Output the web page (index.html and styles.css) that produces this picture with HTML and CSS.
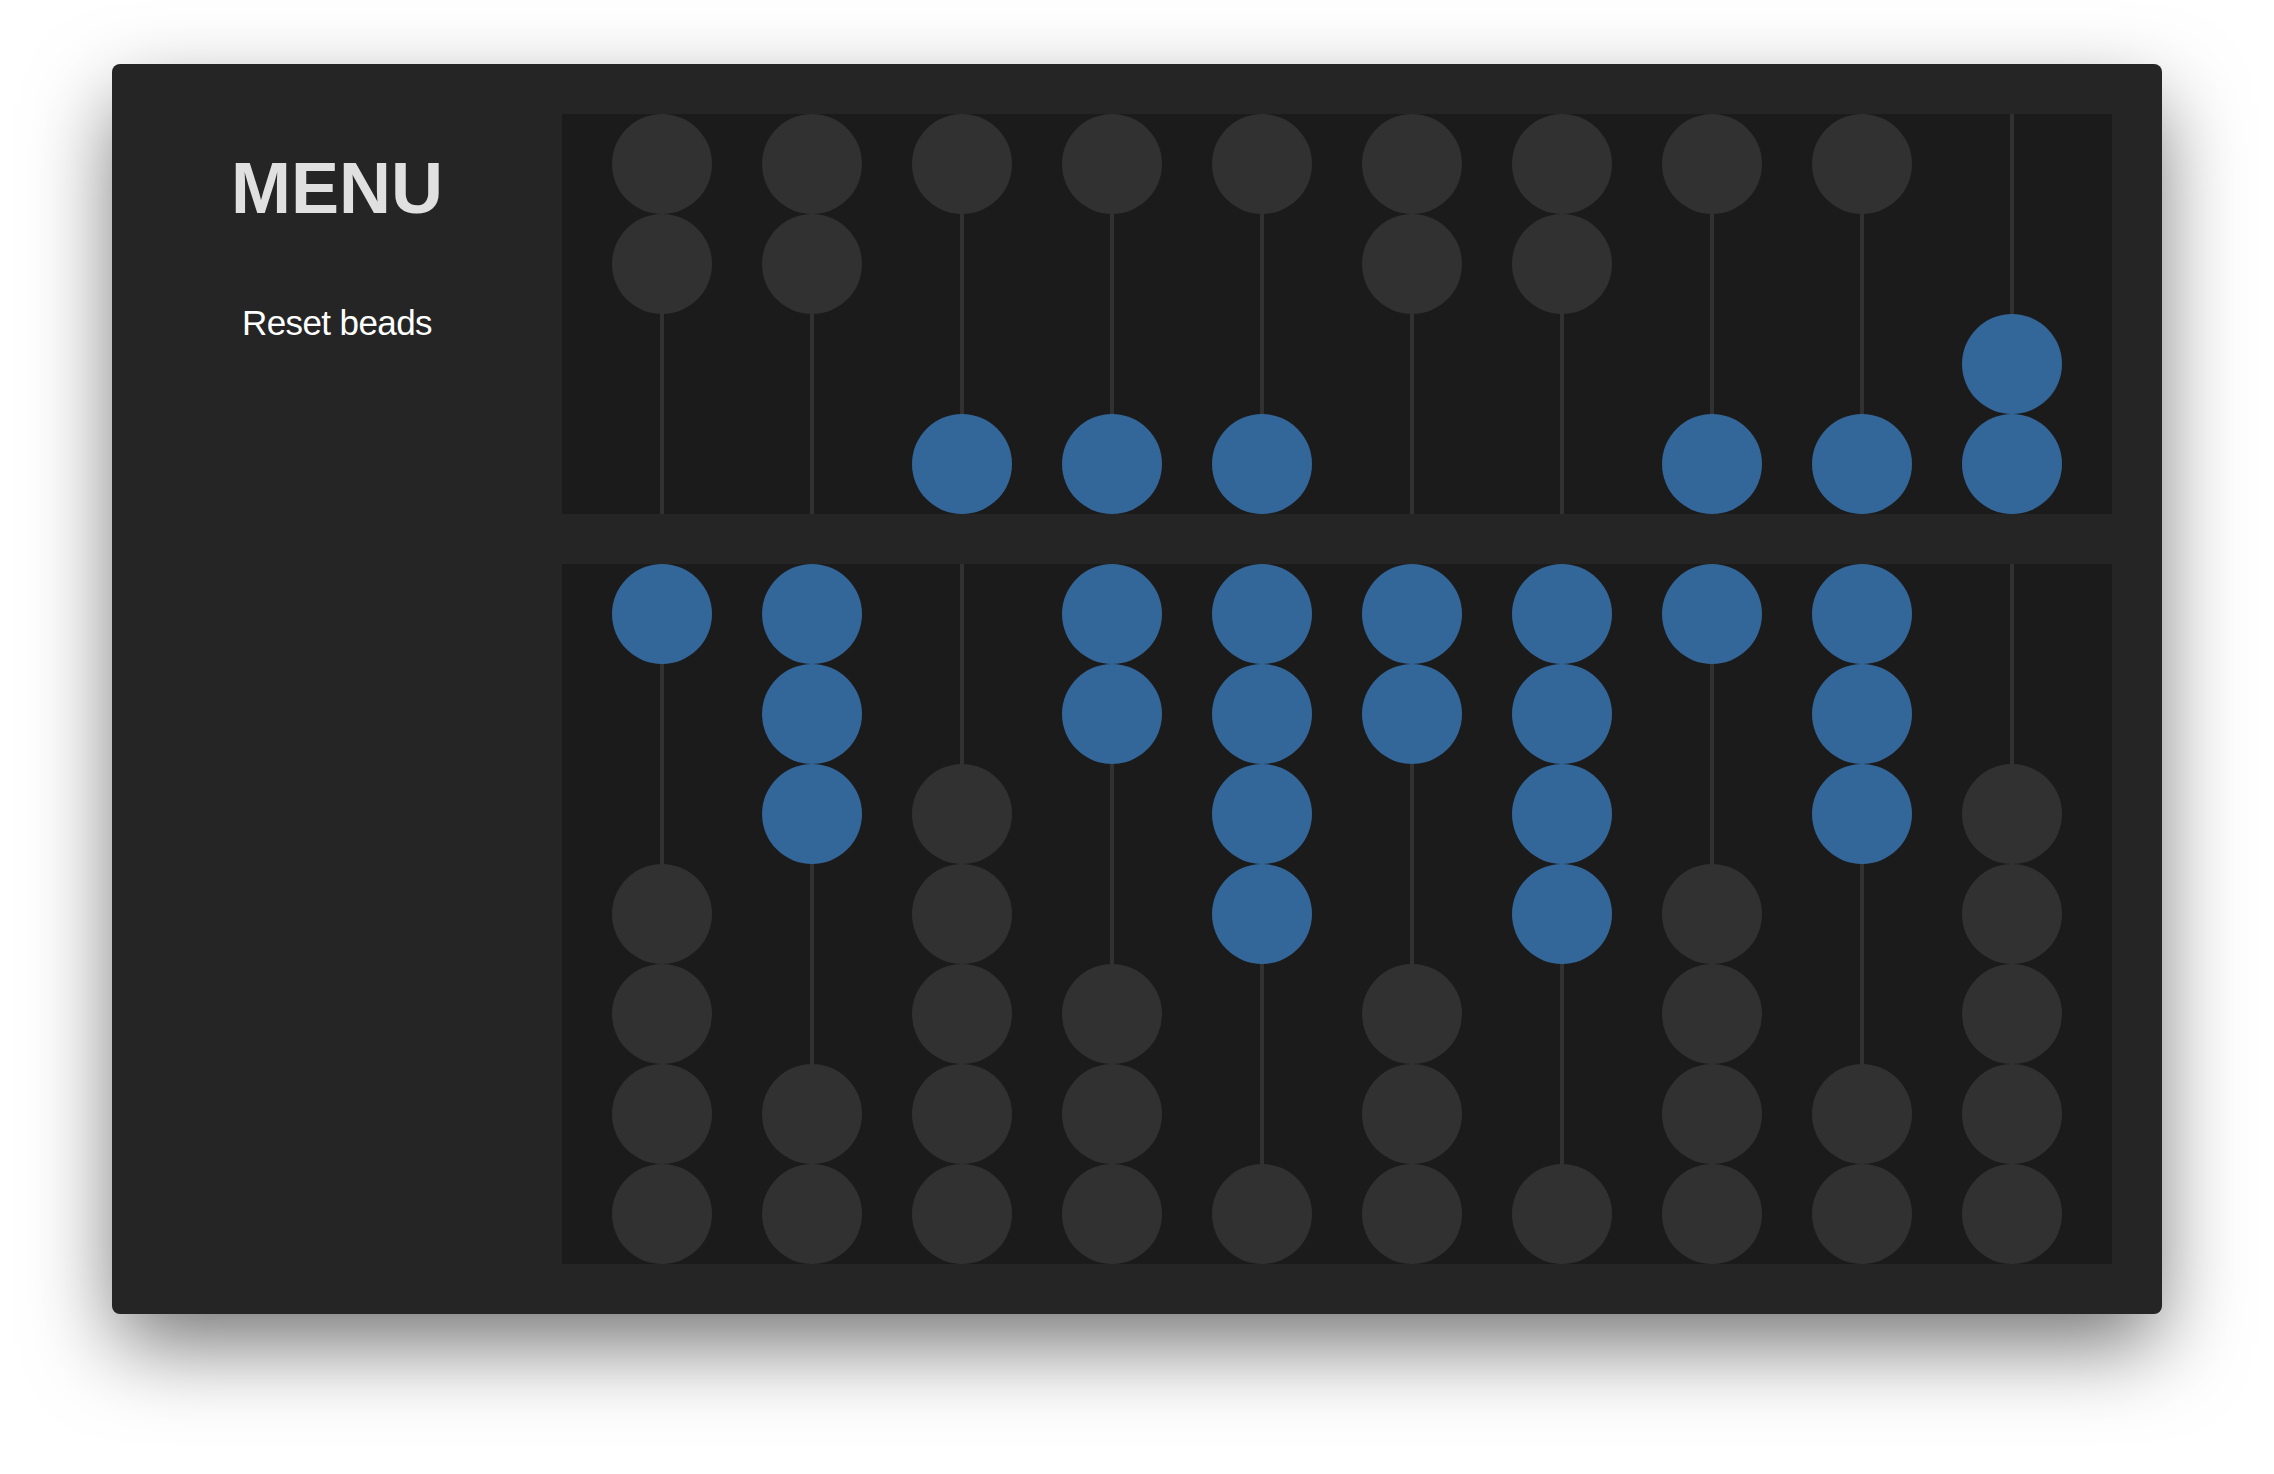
FILE: index.html
```html
<html>
  <head>
    <title>Abacus</title>
<link rel="stylesheet" href="styles.css">
  </head>
  <body>
    <div class="window">
      <div class="menu">
        <h1>MENU</h1>
        <a class="reset" href="#">Reset beads</a>
      </div>
      <div class="abacus">
        <div class="deck upper">
          <div class="rod"><i class="bead"></i><i class="bead"></i><i></i><i></i></div>
          <div class="rod"><i class="bead"></i><i class="bead"></i><i></i><i></i></div>
          <div class="rod"><i class="bead"></i><i></i><i></i><i class="bead on"></i></div>
          <div class="rod"><i class="bead"></i><i></i><i></i><i class="bead on"></i></div>
          <div class="rod"><i class="bead"></i><i></i><i></i><i class="bead on"></i></div>
          <div class="rod"><i class="bead"></i><i class="bead"></i><i></i><i></i></div>
          <div class="rod"><i class="bead"></i><i class="bead"></i><i></i><i></i></div>
          <div class="rod"><i class="bead"></i><i></i><i></i><i class="bead on"></i></div>
          <div class="rod"><i class="bead"></i><i></i><i></i><i class="bead on"></i></div>
          <div class="rod"><i></i><i></i><i class="bead on"></i><i class="bead on"></i></div>
        </div>
        <div class="deck lower">
          <div class="rod"><i class="bead on"></i><i></i><i></i><i class="bead"></i><i class="bead"></i><i class="bead"></i><i class="bead"></i></div>
          <div class="rod"><i class="bead on"></i><i class="bead on"></i><i class="bead on"></i><i></i><i></i><i class="bead"></i><i class="bead"></i></div>
          <div class="rod"><i></i><i></i><i class="bead"></i><i class="bead"></i><i class="bead"></i><i class="bead"></i><i class="bead"></i></div>
          <div class="rod"><i class="bead on"></i><i class="bead on"></i><i></i><i></i><i class="bead"></i><i class="bead"></i><i class="bead"></i></div>
          <div class="rod"><i class="bead on"></i><i class="bead on"></i><i class="bead on"></i><i class="bead on"></i><i></i><i></i><i class="bead"></i></div>
          <div class="rod"><i class="bead on"></i><i class="bead on"></i><i></i><i></i><i class="bead"></i><i class="bead"></i><i class="bead"></i></div>
          <div class="rod"><i class="bead on"></i><i class="bead on"></i><i class="bead on"></i><i class="bead on"></i><i></i><i></i><i class="bead"></i></div>
          <div class="rod"><i class="bead on"></i><i></i><i></i><i class="bead"></i><i class="bead"></i><i class="bead"></i><i class="bead"></i></div>
          <div class="rod"><i class="bead on"></i><i class="bead on"></i><i class="bead on"></i><i></i><i></i><i class="bead"></i><i class="bead"></i></div>
          <div class="rod"><i></i><i></i><i class="bead"></i><i class="bead"></i><i class="bead"></i><i class="bead"></i><i class="bead"></i></div>
        </div>
      </div>
    </div>
  </body>
</html>
```

FILE: styles.css
```css
body {
  margin: 0;
  background-color: #fff;
  font-family: "Liberation Sans", Arial, sans-serif;
}
.window {
  display: flex;
  width: 2050px;
  height: 1250px;
  box-sizing: border-box;
  margin: 64px 0 0 112px;
  padding: 50px 50px 50px 0;
  background-color: #252525;
  border-radius: 8px;
  box-shadow: 0 34px 86px -5px rgba(0, 0, 0, 0.56);
}
.menu {
  flex: 0 0 450px;
  display: flex;
  flex-direction: column;
  align-items: center;
}
.menu h1 {
  margin: 38px 0 0;
  font-size: 72px;
  line-height: 72px;
  font-weight: bold;
  color: #e0e0e0;
}
.reset {
  margin-top: 81px;
  font-size: 35px;
  line-height: 36px;
  letter-spacing: -0.6px;
  color: #fff;
  text-decoration: none;
}
.abacus {
  flex: 1;
  display: flex;
  flex-direction: column;
  gap: 50px;
}
.deck {
  display: flex;
  padding: 0 25px;
  background-color: #1b1b1b;
}
.rod {
  position: relative;
  display: flex;
  flex-direction: column;
  align-items: center;
  width: 150px;
}
.rod::before {
  content: "";
  position: absolute;
  top: 0;
  bottom: 0;
  left: 73px;
  width: 4px;
  background-color: #313131;
}
.rod i {
  position: relative;
  display: block;
  width: 100px;
  height: 100px;
  border-radius: 50%;
}
.rod i.bead {
  background-color: #313131;
}
.rod i.bead.on {
  background-color: #336699;
}
```
